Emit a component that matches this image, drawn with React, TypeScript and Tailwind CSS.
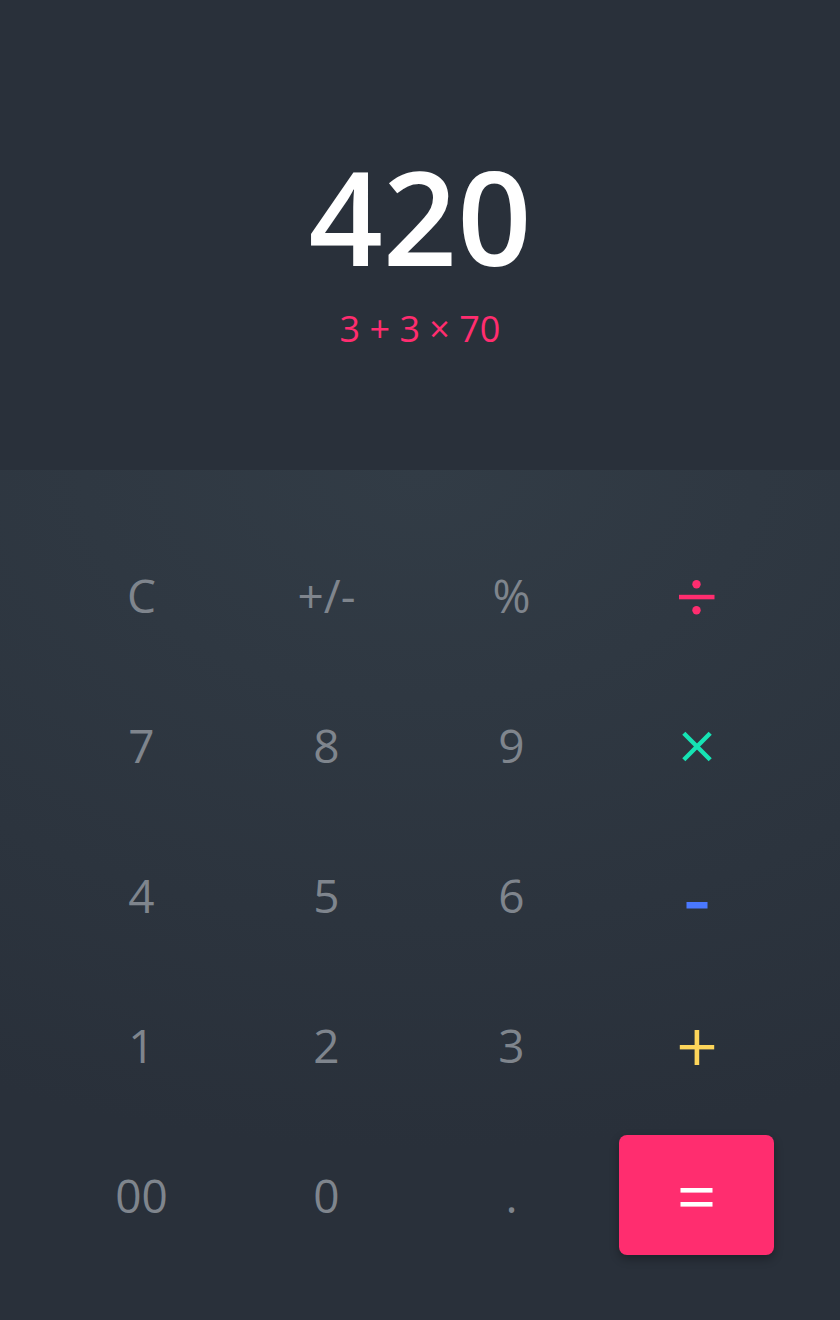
import React from 'react';

type Key = { label: string; kind: 'num' | 'op' | 'eq'; op?: string };

const keys: Key[] = [
  { label: 'C', kind: 'num' },
  { label: '+/-', kind: 'num' },
  { label: '%', kind: 'num' },
  { label: '÷', kind: 'op', op: 'div' },
  { label: '7', kind: 'num' },
  { label: '8', kind: 'num' },
  { label: '9', kind: 'num' },
  { label: '×', kind: 'op', op: 'mul' },
  { label: '4', kind: 'num' },
  { label: '5', kind: 'num' },
  { label: '6', kind: 'num' },
  { label: '-', kind: 'op', op: 'sub' },
  { label: '1', kind: 'num' },
  { label: '2', kind: 'num' },
  { label: '3', kind: 'num' },
  { label: '+', kind: 'op', op: 'add' },
  { label: '00', kind: 'num' },
  { label: '0', kind: 'num' },
  { label: '.', kind: 'num' },
  { label: '=', kind: 'eq' },
];

const OpIcon: React.FC<{ op?: string }> = ({ op }) => {
  if (op === 'div')
    return (
      <svg width="40" height="40" viewBox="0 0 40 40">
        <circle cx="19.5" cy="9.3" r="4.2" fill="#ff2d6f" />
        <rect x="2" y="19.8" width="35.5" height="4.5" fill="#ff2d6f" />
        <circle cx="19.5" cy="35.3" r="4.2" fill="#ff2d6f" />
      </svg>
    );
  if (op === 'mul')
    return (
      <svg width="40" height="40" viewBox="0 0 40 40">
        <path d="M6.8 8.3 L33.2 34.7 M33.2 8.3 L6.8 34.7" stroke="#16e3b4" strokeWidth="4.4" />
      </svg>
    );
  if (op === 'sub')
    return (
      <svg width="40" height="40" viewBox="0 0 40 40">
        <rect x="9.5" y="27" width="21" height="6.5" fill="#4a78ff" />
      </svg>
    );
  if (op === 'add')
    return (
      <svg width="40" height="40" viewBox="0 0 40 40">
        <rect x="2.8" y="20" width="34.4" height="4.4" fill="#fdd55a" />
        <rect x="17.6" y="5" width="4.6" height="35" fill="#fdd55a" />
      </svg>
    );
  return (
    <svg width="40" height="40" viewBox="0 0 40 40">
      <rect x="3.5" y="13" width="32" height="4.6" fill="#ffffff" />
      <rect x="3.5" y="27" width="32" height="4.6" fill="#ffffff" />
    </svg>
  );
};

const App: React.FC = () => {
  return (
    <div className="w-[840px] h-[1320px] bg-[#29303a] flex flex-col font-['Open_Sans',sans-serif]">
      {/* Display */}
      <div className="h-[470px] flex flex-col items-center pt-[151px] gap-[30px] bg-[#29303a]">
        <div className="text-[130px] leading-none font-semibold text-white">420</div>
        <div className="text-[36px] leading-none text-[#ff2d6f]">3 + 3 × 70</div>
      </div>

      {/* Keypad */}
      <div className="flex-1 pt-[50px] pl-[49px] bg-[radial-gradient(120%_80%_at_50%_0%,#323c46,#29303a)]">
        <div className="grid grid-cols-[repeat(4,185px)] auto-rows-[150px]">
          {keys.map((k) => (
            <div key={k.label} className="flex items-center justify-center p-[15px]">
              {k.kind === 'num' && (
                <span className="text-[46px] leading-none font-normal text-[#7f858d]">{k.label}</span>
              )}
              {k.kind === 'op' && <OpIcon op={k.op} />}
              {k.kind === 'eq' && (
                <button className="w-full h-full rounded-lg bg-[#ff2d6f] flex items-center justify-center shadow-[0_4px_10px_rgba(0,0,0,0.3)]">
                  <OpIcon op="eq" />
                </button>
              )}
            </div>
          ))}
        </div>
      </div>
    </div>
  );
};

export default App;
